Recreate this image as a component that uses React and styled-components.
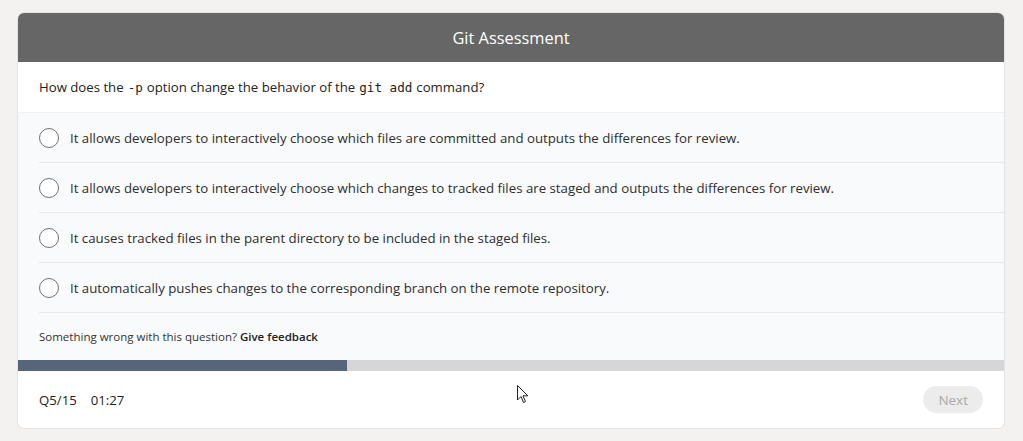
import React from "react";
import styled, { createGlobalStyle } from "styled-components";

const GlobalStyle = createGlobalStyle`
  html, body {
    margin: 0;
    padding: 0;
    background-color: #f3f2f1;
    font-family: "Open Sans", "Noto Sans", sans-serif;
  }
`;

const Page = styled.div`
  padding: 13px 19px 13px 18px;
`;

const Card = styled.div`
  position: relative;
  background-color: #fff;
  border-radius: 6px;
  overflow: hidden;
  box-shadow: 0 0 0 1px #e4e4e4;
`;

const Header = styled.div`
  height: 49px;
  background-color: #666666;
  color: #fff;
  display: flex;
  align-items: center;
  justify-content: center;
  font-size: 16.4px;
`;

const Question = styled.div`
  height: 51px;
  display: flex;
  align-items: center;
  padding-left: 21px;
  font-size: 13.2px;
  color: #222;
  border-bottom: 1px solid #eef0f3;
  box-sizing: border-box;
`;

const Code = styled.code`
  font-family: "DejaVu Sans Mono", "Liberation Mono", monospace;
  font-size: 12.6px;
  margin: 0 4px;
`;

const Options = styled.div`
  background-color: #f9fafb;
  padding-left: 21px;
`;

const Option = styled.label`
  height: 50px;
  display: flex;
  align-items: center;
  gap: 11px;
  font-size: 13.25px;
  color: #2e2e2e;
  border-bottom: 1px solid #e6e8eb;
  box-sizing: border-box;
  cursor: pointer;
`;

const Radio = styled.span`
  width: 20px;
  height: 20px;
  border-radius: 50%;
  border: 1.5px solid #707070;
  box-sizing: border-box;
  background-color: #fff;
  flex-shrink: 0;
`;

const Feedback = styled.div`
  height: 47px;
  display: flex;
  align-items: center;
  padding-left: 21px;
  background-color: #f9fafb;
  font-size: 11.5px;
  color: #333;

  b {
    margin-left: 3px;
    font-weight: 600;
    color: #222;
  }
`;

const Track = styled.div`
  height: 11px;
  background-color: #d6d6d8;
`;

const Fill = styled.div`
  height: 100%;
  background-color: #56657a;
`;

const Footer = styled.div`
  height: 57px;
  display: flex;
  align-items: center;
  justify-content: space-between;
  padding: 0 21px;
  font-size: 13.2px;
  color: #222;
`;

const Meta = styled.div`
  display: flex;
  gap: 14px;
`;

const NextButton = styled.button`
  border: none;
  outline: none;
  background-color: #ececec;
  color: #a8a8a8;
  font-family: inherit;
  font-size: 13.5px;
  border-radius: 14px;
  height: 27px;
  padding: 0 15px;
`;

const Pointer = styled.svg`
  position: absolute;
  left: 499px;
  top: 372px;
`;

const options = [
  "It allows developers to interactively choose which files are committed and outputs the differences for review.",
  "It allows developers to interactively choose which changes to tracked files are staged and outputs the differences for review.",
  "It causes tracked files in the parent directory to be included in the staged files.",
  "It automatically pushes changes to the corresponding branch on the remote repository.",
];

export default function App() {
  return (
    <Page>
      <GlobalStyle />
      <Card>
        <Header>Git Assessment</Header>
        <Question>
          How does the<Code>-p</Code>option change the behavior of the<Code>git add</Code>command?
        </Question>
        <Options>
          {options.map((text) => (
            <Option key={text}>
              <Radio />
              {text}
            </Option>
          ))}
        </Options>
        <Feedback>
          Something wrong with this question?<b>Give feedback</b>
        </Feedback>
        <Track>
          <Fill style={{ width: `${(5 / 15) * 100}%` }} />
        </Track>
        <Footer>
          <Meta>
            <span>Q5/15</span>
            <span>01:27</span>
          </Meta>
          <NextButton disabled>Next</NextButton>
        </Footer>
        <Pointer width="12" height="19" viewBox="0 0 12 19">
          <path d="M0.5 0.5 L0.5 15 L4 11.5 L6.5 17.5 L8.5 16.6 L6 10.8 L10.8 10.8 Z" fill="#fff" stroke="#222" strokeWidth="1" />
        </Pointer>
      </Card>
    </Page>
  );
}
